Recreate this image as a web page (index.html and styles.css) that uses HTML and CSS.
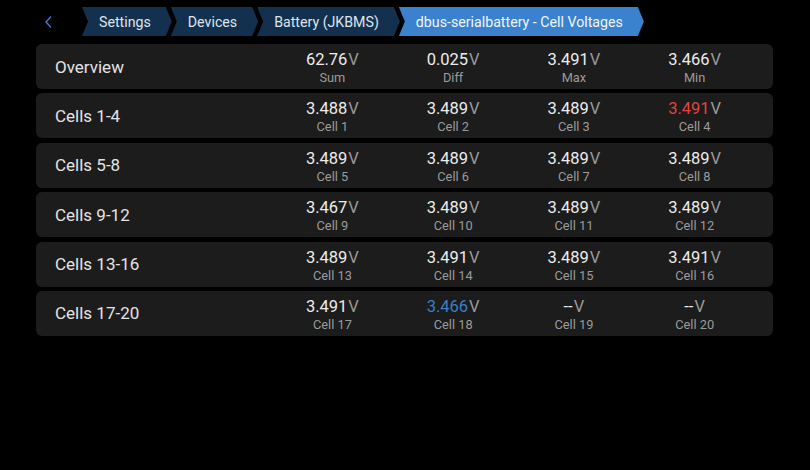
FILE: index.html
```html
<!DOCTYPE html>
<html>
<head>
<meta charset="utf-8">
<link rel="stylesheet" href="styles.css">
</head>
<body>
<header class="topbar">
  <svg class="back" width="10" height="14" viewBox="0 0 10 14"><path d="M7 1.5 L2 7 L7 12.5" fill="none" stroke="#3b7fc4" stroke-width="1.4"/></svg>
  <nav class="crumbs">
    <span class="crumb">Settings</span>
    <span class="crumb">Devices</span>
    <span class="crumb">Battery (JKBMS)</span>
    <span class="crumb active">dbus-serialbattery - Cell Voltages</span>
  </nav>
</header>
<main class="list">
  <div class="row">
    <div class="label">Overview</div>
    <div class="cell"><div class="val">62.76<span class="unit">V</span></div><div class="cap">Sum</div></div>
    <div class="cell"><div class="val">0.025<span class="unit">V</span></div><div class="cap">Diff</div></div>
    <div class="cell"><div class="val">3.491<span class="unit">V</span></div><div class="cap">Max</div></div>
    <div class="cell"><div class="val">3.466<span class="unit">V</span></div><div class="cap">Min</div></div>
  </div>
  <div class="row">
    <div class="label">Cells 1-4</div>
    <div class="cell"><div class="val">3.488<span class="unit">V</span></div><div class="cap">Cell 1</div></div>
    <div class="cell"><div class="val">3.489<span class="unit">V</span></div><div class="cap">Cell 2</div></div>
    <div class="cell"><div class="val">3.489<span class="unit">V</span></div><div class="cap">Cell 3</div></div>
    <div class="cell"><div class="val"><span class="hi">3.491</span><span class="unit">V</span></div><div class="cap">Cell 4</div></div>
  </div>
  <div class="row">
    <div class="label">Cells 5-8</div>
    <div class="cell"><div class="val">3.489<span class="unit">V</span></div><div class="cap">Cell 5</div></div>
    <div class="cell"><div class="val">3.489<span class="unit">V</span></div><div class="cap">Cell 6</div></div>
    <div class="cell"><div class="val">3.489<span class="unit">V</span></div><div class="cap">Cell 7</div></div>
    <div class="cell"><div class="val">3.489<span class="unit">V</span></div><div class="cap">Cell 8</div></div>
  </div>
  <div class="row">
    <div class="label">Cells 9-12</div>
    <div class="cell"><div class="val">3.467<span class="unit">V</span></div><div class="cap">Cell 9</div></div>
    <div class="cell"><div class="val">3.489<span class="unit">V</span></div><div class="cap">Cell 10</div></div>
    <div class="cell"><div class="val">3.489<span class="unit">V</span></div><div class="cap">Cell 11</div></div>
    <div class="cell"><div class="val">3.489<span class="unit">V</span></div><div class="cap">Cell 12</div></div>
  </div>
  <div class="row">
    <div class="label">Cells 13-16</div>
    <div class="cell"><div class="val">3.489<span class="unit">V</span></div><div class="cap">Cell 13</div></div>
    <div class="cell"><div class="val">3.491<span class="unit">V</span></div><div class="cap">Cell 14</div></div>
    <div class="cell"><div class="val">3.489<span class="unit">V</span></div><div class="cap">Cell 15</div></div>
    <div class="cell"><div class="val">3.491<span class="unit">V</span></div><div class="cap">Cell 16</div></div>
  </div>
  <div class="row">
    <div class="label">Cells 17-20</div>
    <div class="cell"><div class="val">3.491<span class="unit">V</span></div><div class="cap">Cell 17</div></div>
    <div class="cell"><div class="val"><span class="lo">3.466</span><span class="unit">V</span></div><div class="cap">Cell 18</div></div>
    <div class="cell"><div class="val">--<span class="unit">V</span></div><div class="cap">Cell 19</div></div>
    <div class="cell"><div class="val">--<span class="unit">V</span></div><div class="cap">Cell 20</div></div>
  </div>
</main>
</body>
</html>
```
FILE: styles.css
```css
html, body {
  margin: 0;
  padding: 0;
  background: #000;
  font-family: Roboto, "Noto Sans", sans-serif;
  color: #e6e6e6;
}
.topbar {
  height: 44px;
  display: flex;
  align-items: flex-start;
  padding-top: 7px;
  box-sizing: border-box;
  padding-left: 44px;
}
.back {
  margin-top: 8px;
  flex: none;
}
.crumbs {
  display: flex;
  margin-left: 28px;
}
.crumb {
  height: 29px;
  line-height: 30px;
  font-size: 14.2px;
  color: #dfe5ec;
  background: #14304f;
  padding: 0 21px 0 17px;
  clip-path: polygon(0 0, calc(100% - 6px) 0, 100% 50%, calc(100% - 6px) 100%, 0 100%, 6px 50%);
  margin-right: -1px;
  white-space: nowrap;
}
.crumb.active {
  background: #3a82cd;
  color: #f2f6fb;
}
.list {
  padding: 0 37px 0 36px;
  display: flex;
  flex-direction: column;
  gap: 4.4px;
}
.row {
  height: 45px;
  background: #1c1c1c;
  border-radius: 6px;
  display: flex;
  align-items: center;
  padding-right: 18px;
}
.label {
  width: 236px;
  box-sizing: border-box;
  padding-left: 19px;
  font-size: 17px;
  color: #e4e4e4;
  flex: none;
}
.cell {
  flex: 1;
  text-align: center;
  padding-top: 2px;
}
.val {
  font-size: 16.5px;
  line-height: 20px;
  color: #ececec;
}
.unit {
  color: #9a9a9a;
  margin-left: 1px;
}
.hi { color: #e0463e; }
.lo { color: #3b7fc4; }
.cap {
  font-size: 12.8px;
  line-height: 15px;
  color: #9b9b9b;
}
```
